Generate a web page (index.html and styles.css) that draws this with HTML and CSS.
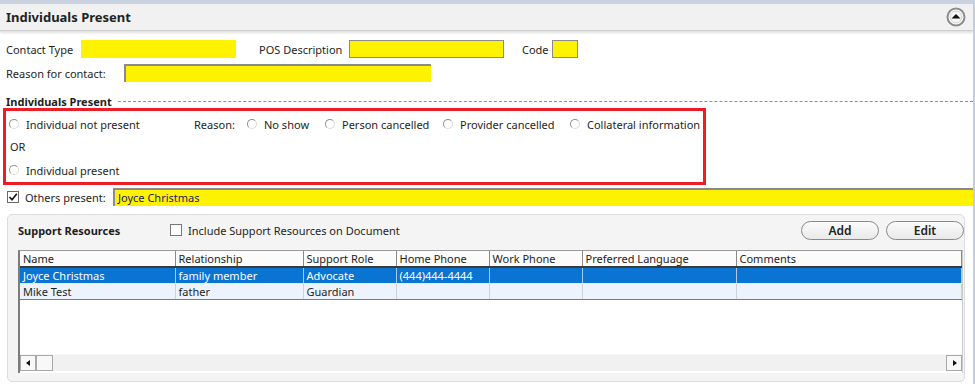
FILE: index.html
```html
<!DOCTYPE html>
<html lang="en">
<head>
  <meta charset="UTF-8" />
  <title>Individuals Present</title>
  <link rel="stylesheet" href="styles.css">
</head>
<body>
  <div class="page">
    <div class="header">
      <h1>Individuals Present</h1>
      <svg class="collapse" width="20" height="20" viewBox="0 0 20 20">
        <circle cx="10" cy="10" r="8.5" fill="#fff" stroke="#8c8c8c" stroke-width="2"/>
        <circle cx="10" cy="10" r="6" fill="#f4f4f4" stroke="#d0d0d0" stroke-width="1"/>
        <path d="M5.5 11.5 L10 7 L14.5 11.5 Z" fill="#111"/>
      </svg>
    </div>

    <div class="content">
      <div class="row row-top">
        <label class="lbl-contact">Contact Type</label>
        <span class="field plain w-contact"></span>
        <label class="lbl-pos">POS Description</label>
        <span class="field boxed w-pos"></span>
        <label class="lbl-code">Code</label>
        <span class="field boxed w-code"></span>
      </div>
      <div class="row row-reason">
        <label class="lbl-reason">Reason for contact:</label>
        <span class="field inset w-reason"></span>
      </div>

      <div class="section-title">
        <span>Individuals Present</span>
        <span class="dash"></span>
      </div>

      <div class="highlight">
        <div class="radio-row">
          <span class="opt o-absent"><i class="radio"></i>Individual not present</span>
          <span class="reason-label">Reason:</span>
          <span class="opt o-noshow"><i class="radio"></i>No show</span>
          <span class="opt o-person"><i class="radio"></i>Person cancelled</span>
          <span class="opt o-provider"><i class="radio"></i>Provider cancelled</span>
          <span class="opt"><i class="radio"></i>Collateral information</span>
        </div>
        <div class="or">OR</div>
        <div class="radio-row">
          <span class="opt"><i class="radio"></i>Individual present</span>
        </div>
      </div>

      <div class="others">
        <span class="check">
          <svg width="10" height="10" viewBox="0 0 10 10"><path d="M1.5 5 L4 7.8 L8.8 1.8" fill="none" stroke="#111" stroke-width="1.6"/></svg>
        </span>
        <label>Others present:</label>
        <span class="field inset others-field">Joyce Christmas</span>
      </div>

      <div class="panel">
        <div class="panel-head">
          <span class="panel-title">Support Resources</span>
          <span class="check"></span>
          <span class="include">Include Support Resources on Document</span>
          <span class="spacer"></span>
          <button class="pill">Add</button>
          <button class="pill">Edit</button>
        </div>

        <div class="grid">
          <table>
            <thead>
              <tr>
                <th class="c-name">Name</th>
                <th class="c-rel">Relationship</th>
                <th class="c-role">Support Role</th>
                <th class="c-home">Home Phone</th>
                <th class="c-work">Work Phone</th>
                <th class="c-lang">Preferred Language</th>
                <th>Comments</th>
              </tr>
            </thead>
            <tbody>
              <tr class="selected">
                <td>Joyce Christmas</td>
                <td>family member</td>
                <td>Advocate</td>
                <td>(444)444-4444</td>
                <td></td>
                <td></td>
                <td></td>
              </tr>
              <tr class="alt">
                <td>Mike Test</td>
                <td>father</td>
                <td>Guardian</td>
                <td></td>
                <td></td>
                <td></td>
                <td></td>
              </tr>
            </tbody>
          </table>
          <div class="grid-fill"></div>
          <div class="hscroll">
            <span class="arrow left"></span>
            <span class="thumb"></span>
            <span class="track"></span>
            <span class="arrow right"></span>
          </div>
        </div>
      </div>
    </div>
  </div>
</body>
</html>
```

FILE: styles.css
```css
body {
  margin: 0;
  background: #fff;
  font-family: 'Noto Sans', 'Open Sans', sans-serif;
  font-size: 11px;
  color: #1e1e1e;
}

.page {
  width: 975px;
  height: 384px;
  overflow: hidden;
  border-top: 4px solid #c9d2df;
  box-sizing: border-box;
  border-right: 2px solid #c3cddc;
}

.header {
  height: 26px;
  background: #f1f1f1;
  border-bottom: 1px solid #cfcfcf;
  box-shadow: 0 2px 2px rgba(0, 0, 0, 0.12);
  display: flex;
  align-items: center;
  padding: 0 6px;
}

.header h1 {
  margin: 0;
  font-size: 13px;
  font-weight: bold;
  color: #222;
  flex: 1;
}

.collapse {
  margin-right: 1px;
}

.content {
  padding-top: 9px;
}

.row {
  display: flex;
  align-items: center;
  padding-left: 6px;
  height: 18px;
}

.row-reason {
  margin-top: 6px;
}

.lbl-contact { width: 75px; }
.lbl-pos { width: 90px; margin-left: 23px; }
.lbl-code { width: 30px; margin-left: 18px; }
.lbl-reason { width: 118px; }

.field {
  display: inline-block;
  height: 18px;
  background: #fff200;
  box-sizing: border-box;
}

.field.boxed {
  border: 1px solid #8a8a8a;
}

.field.inset {
  border-top: 2px solid #8a8a8a;
  border-left: 2px solid #8a8a8a;
}

.w-contact { width: 155px; }
.w-pos { width: 155px; }
.w-code { width: 26px; }
.w-reason { width: 307px; }

.section-title {
  display: flex;
  align-items: center;
  margin-top: 12px;
  padding-left: 6px;
  font-weight: bold;
  height: 14px;
}

.section-title .dash {
  flex: 1;
  border-top: 1px dashed #8f8f8f;
  margin-left: 6px;
  margin-top: 1px;
}

.highlight {
  margin: 0 0 0 3px;
  width: 703px;
  height: 77px;
  box-sizing: border-box;
  border: 3px solid #ee1c25;
  padding: 4px 0 0 3px;
}

.radio-row {
  display: flex;
  align-items: center;
  height: 18px;
  white-space: nowrap;
}

.opt {
  display: inline-flex;
  align-items: center;
}

.radio {
  width: 8px;
  height: 8px;
  border-radius: 50%;
  border: 1px solid #8e8e8e;
  border-right-color: #dcdcdc;
  border-bottom-color: #dcdcdc;
  background: #fff;
  margin-right: 7px;
}

.o-absent { width: 185px; }
.reason-label { width: 53px; }
.o-noshow { width: 78px; }
.o-person { width: 118px; }
.o-provider { width: 127px; }

.or {
  height: 18px;
  line-height: 18px;
  padding-left: 1px;
  margin: 5px 0;
}

.others {
  display: flex;
  align-items: center;
  height: 18px;
  margin-top: 3px;
  padding-left: 7px;
}

.check {
  width: 10px;
  height: 10px;
  border: 1px solid #6a6a6a;
  background: #fff;
  display: inline-flex;
  align-items: center;
  justify-content: center;
}

.others label {
  margin-left: 6px;
  width: 88px;
}

.others-field {
  flex: 1;
  padding-left: 3px;
  line-height: 15px;
  color: #1a1a60;
}

.panel {
  margin: 8px 8px 0 7px;
  height: 168px;
  background: #f4f4f4;
  border: 1px solid #dcdcdc;
  border-radius: 5px;
  padding: 5px 0 0 10px;
  box-sizing: border-box;
}

.panel-head {
  display: flex;
  align-items: center;
  height: 20px;
}

.panel-title {
  font-weight: bold;
  width: 152px;
}

.panel-head .check {
  border-color: #777;
  margin-right: 6px;
}

.spacer {
  flex: 1;
}

.pill {
  font-family: inherit;
  font-size: 12px;
  font-weight: 600;
  color: #222;
  width: 78px;
  height: 19px;
  padding: 0;
  margin-left: 7px;
  border: 1px solid #8a8a8a;
  border-radius: 10px;
  background: linear-gradient(#fbfbfb, #e9e9e9);
}

.grid {
  margin-top: 10px;
  width: 945px;
  height: 123px;
  background: #fff;
  border-left: 2px solid #7c7c7c;
  border-top: 1px solid #9a9a9a;
  border-right: 1px solid #c8c8c8;
  display: flex;
  flex-direction: column;
  box-sizing: border-box;
}

table {
  border-collapse: collapse;
  table-layout: fixed;
  width: 942px;
}

th, td {
  box-sizing: border-box;
  height: 16px;
  padding: 0 0 0 3px;
  text-align: left;
  font-weight: normal;
  white-space: nowrap;
  overflow: hidden;
  border-right: 1px solid #a0a0a0;
  line-height: 15px;
}

thead th {
  background: #fbfbfb;
  border-bottom: 2px solid #3a3a3a;
  border-right-color: #8a8a8a;
}

.c-name { width: 155px; }
.c-rel { width: 128px; }
.c-role { width: 93px; }
.c-home { width: 93px; }
.c-work { width: 93px; }
.c-lang { width: 154px; }

tr.selected td {
  background: #0a74d2;
  color: #fff;
  border-right-color: #a9c9ee;
  border-bottom: 1px solid #e4ecf7;
}

tr.alt td {
  background: #edf3fd;
  border-right-color: #c9d3df;
  border-bottom: 1px solid #7b7b7b;
}

.grid-fill {
  flex: 1;
}

.hscroll {
  display: flex;
  height: 16px;
  background: #f1f1f1;
  border-top: 1px solid #f6f6f6;
  margin-bottom: 2px;
}

.arrow, .thumb {
  width: 16px;
  height: 16px;
  box-sizing: border-box;
  border: 1px solid #a8a8a8;
  background: #f8f8f8;
  position: relative;
}

.thumb {
  width: 17px;
}

.track {
  flex: 1;
}

.arrow::after {
  content: "";
  position: absolute;
  top: 4px;
  border-top: 3.5px solid transparent;
  border-bottom: 3.5px solid transparent;
}

.arrow.left::after {
  left: 5px;
  border-right: 4px solid #111;
}

.arrow.right::after {
  left: 6px;
  border-left: 4px solid #111;
}
```
